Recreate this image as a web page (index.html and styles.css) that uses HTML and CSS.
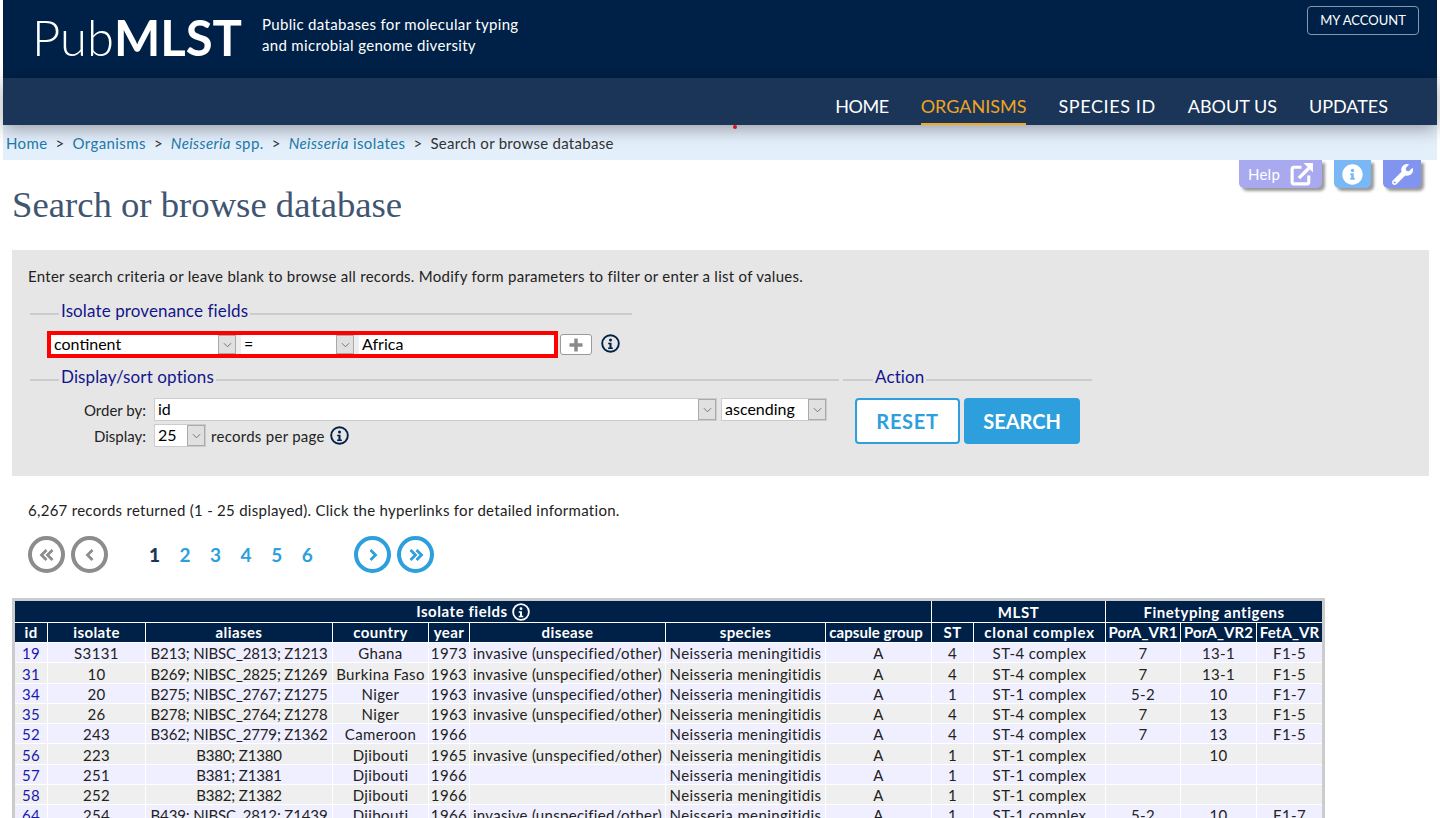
FILE: index.html
```html
<!DOCTYPE html>
<html lang="en">
<head>
<meta charset="utf-8">
<title>Search or browse database</title>
<link rel="stylesheet" href="styles.css">
</head>
<body>
<div class="page">
  <header class="masthead">
    <div class="logo"><span class="logo-light">Pub</span><b>MLST</b></div>
    <div class="tagline">Public databases for molecular typing<br>and microbial genome diversity</div>
    <a class="account">MY ACCOUNT</a>
  </header>
  <nav class="mainnav">
    <a class="nav-home">HOME</a><a class="active">ORGANISMS</a><a class="nav-id">SPECIES ID</a><a>ABOUT US</a><a>UPDATES</a>
    <span class="reddot"></span>
  </nav>
  <div class="crumbs"><a>Home</a><span class="sep">&gt;</span><a>Organisms</a><span class="sep">&gt;</span><a><i>Neisseria</i> spp.</a><span class="sep">&gt;</span><a><i>Neisseria</i> isolates</a><span class="sep">&gt;</span><span>Search or browse database</span></div>
  <main class="content">
    <div class="tools">
      <a class="tab tab-help">Help
        <svg class="ext" viewBox="0 0 24 24"><path d="M19 13v6.5a1.5 1.5 0 0 1-1.5 1.5h-13A1.5 1.5 0 0 1 3 19.500v-13A1.500 1.500 0 0 1 4.500 5H12" fill="none" stroke="currentColor" stroke-width="3"/><path d="M9.500 15.500 L19 6" fill="none" stroke="currentColor" stroke-width="3.200"/><path d="M14 1h9v9z" fill="currentColor"/></svg>
      </a>
      <a class="tab tab-info"><svg class="ic" viewBox="0 0 512 512"><path fill="currentColor" d="M256 8C119.043 8 8 119.083 8 256c0 136.997 111.043 248 248 248s248-111.003 248-248C504 119.083 392.957 8 256 8zm0 110c23.196 0 42 18.804 42 42s-18.804 42-42 42-42-18.804-42-42 18.804-42 42-42zm56 254c0 6.627-5.373 12-12 12h-88c-6.627 0-12-5.373-12-12v-24c0-6.627 5.373-12 12-12h12v-64h-12c-6.627 0-12-5.373-12-12v-24c0-6.627 5.373-12 12-12h64c6.627 0 12 5.373 12 12v100h12c6.627 0 12 5.373 12 12v24z"/></svg></a>
      <a class="tab tab-tool"><svg class="ic" viewBox="0 0 512 512"><path fill="currentColor" d="M507.73 109.1c-2.24-9.03-13.54-12.09-20.12-5.51l-74.36 74.36-67.88-11.31-11.31-67.88 74.36-74.36c6.62-6.62 3.43-17.9-5.66-20.16-47.38-11.74-99.55.91-136.58 37.93-39.64 39.64-50.55 97.1-34.05 147.2L18.74 402.76c-24.99 24.99-24.99 65.51 0 90.5 24.99 24.99 65.51 24.99 90.5 0l213.21-213.21c50.12 16.71 107.47 5.68 147.37-34.22 37.07-37.07 49.7-89.32 37.91-136.73zM64 472c-13.25 0-24-10.75-24-24 0-13.26 10.75-24 24-24s24 10.74 24 24c0 13.25-10.75 24-24 24z"/></svg></a>
    </div>
    <h1>Search or browse database</h1>
    <section class="panel">
      <p class="intro">Enter search criteria or leave blank to browse all records. Modify form parameters to filter or enter a list of values.</p>
      <div class="fs fs-prov">
        <div class="legend"><span>Isolate provenance fields</span></div>
        <div class="prov-row">
          <div class="redbox">
            <div class="select s-field"><span>continent</span><i class="arrow"><svg viewBox="0 0 10 6"><path d="M1 1l4 4 4-4" fill="none" stroke="#666" stroke-width="1"/></svg></i></div>
            <div class="select s-op"><span>=</span><i class="arrow"><svg viewBox="0 0 10 6"><path d="M1 1l4 4 4-4" fill="none" stroke="#666" stroke-width="1"/></svg></i></div>
            <div class="select s-val"><span>Africa</span></div>
          </div>
          <a class="plus"><svg viewBox="0 0 16 16"><path d="M8 1.500v13M1.500 8h13" stroke="#8a8a8a" stroke-width="3.500" fill="none"/></svg></a>
          <svg class="oinfo oinfo-a" viewBox="0 0 24 24"><circle cx="12" cy="12" r="10.500" fill="none" stroke="currentColor" stroke-width="2.400"/><circle cx="12" cy="7.500" r="1.900" fill="currentColor"/><path d="M9 11h4.300v6H15v2H9v-2h1.700v-4H9z" fill="currentColor"/></svg>
        </div>
      </div>
      <div class="fs-row">
        <div class="fs fs-display">
          <div class="legend"><span>Display/sort options</span></div>
          <div class="opt-row opt-first">
            <label>Order by:</label>
            <div class="select s-order"><span>id</span><i class="arrow"><svg viewBox="0 0 10 6"><path d="M1 1l4 4 4-4" fill="none" stroke="#666" stroke-width="1"/></svg></i></div>
            <div class="select s-dir"><span>ascending</span><i class="arrow"><svg viewBox="0 0 10 6"><path d="M1 1l4 4 4-4" fill="none" stroke="#666" stroke-width="1"/></svg></i></div>
          </div>
          <div class="opt-row">
            <label>Display:</label>
            <div class="select s-num"><span>25</span><i class="arrow"><svg viewBox="0 0 10 6"><path d="M1 1l4 4 4-4" fill="none" stroke="#666" stroke-width="1"/></svg></i></div>
            <span class="perpage">records per page</span>
            <svg class="oinfo" viewBox="0 0 24 24"><circle cx="12" cy="12" r="10.500" fill="none" stroke="currentColor" stroke-width="2.400"/><circle cx="12" cy="7.500" r="1.900" fill="currentColor"/><path d="M9 11h4.300v6H15v2H9v-2h1.700v-4H9z" fill="currentColor"/></svg>
          </div>
        </div>
        <div class="fs fs-action">
          <div class="legend legend-action"><span>Action</span></div>
          <div class="actions"><a class="btn btn-reset">RESET</a><a class="btn btn-search">SEARCH</a></div>
        </div>
      </div>
    </section>
    <p class="returned">6,267 records returned (1 - 25 displayed). Click the hyperlinks for detailed information.</p>
    <div class="pager">
      <a class="circ off"><svg viewBox="0 0 20 20"><path d="M9.500 5l-5 5 5 5M15.500 5l-5 5 5 5" fill="none" stroke="currentColor" stroke-width="2.800"/></svg></a>
      <a class="circ off"><svg viewBox="0 0 20 20"><path d="M12.500 5l-5 5 5 5" fill="none" stroke="currentColor" stroke-width="2.800"/></svg></a>
      <div class="nums"><b class="cur">1</b><a>2</a><a>3</a><a>4</a><a>5</a><a>6</a></div>
      <a class="circ"><svg viewBox="0 0 20 20"><path d="M7.500 5l5 5-5 5" fill="none" stroke="currentColor" stroke-width="2.800"/></svg></a>
      <a class="circ"><svg viewBox="0 0 20 20"><path d="M4.500 5l5 5-5 5M10.500 5l5 5-5 5" fill="none" stroke="currentColor" stroke-width="2.800"/></svg></a>
    </div>
    <div class="tablewrap">
    <table class="results">
      <colgroup><col class="c1"><col class="c2"><col class="c3"><col class="c4"><col class="c5"><col class="c6"><col class="c7"><col class="c8"><col class="c9"><col class="c10"><col class="c11"><col class="c12"><col class="c13"></colgroup>
      <thead>
        <tr class="h1row"><th colspan="8">Isolate fields <svg class="oinfo th-info" viewBox="0 0 24 24"><circle cx="12" cy="12" r="10.500" fill="none" stroke="currentColor" stroke-width="2.400"/><circle cx="12" cy="7.500" r="1.900" fill="currentColor"/><path d="M9 11h4.300v6H15v2H9v-2h1.700v-4H9z" fill="currentColor"/></svg></th><th colspan="2">MLST</th><th colspan="3">Finetyping antigens</th></tr>
        <tr class="h2row"><th>id</th><th>isolate</th><th>aliases</th><th>country</th><th>year</th><th>disease</th><th>species</th><th class="th-tight th-capsule">capsule group</th><th>ST</th><th class="th-wide">clonal complex</th><th class="th-tight">PorA_VR1</th><th class="th-tight">PorA_VR2</th><th class="th-tight">FetA_VR</th></tr>
      </thead>
      <tbody>
        <tr class="odd"><td><a>19</a></td><td>S3131</td><td class="alias">B213; NIBSC_2813; Z1213</td><td>Ghana</td><td>1973</td><td class="dis">invasive (unspecified/other)</td><td>Neisseria meningitidis</td><td>A</td><td>4</td><td>ST-4 complex</td><td>7</td><td>13-1</td><td>F1-5</td></tr>
        <tr class="even"><td><a>31</a></td><td>10</td><td class="alias">B269; NIBSC_2825; Z1269</td><td>Burkina Faso</td><td>1963</td><td class="dis">invasive (unspecified/other)</td><td>Neisseria meningitidis</td><td>A</td><td>4</td><td>ST-4 complex</td><td>7</td><td>13-1</td><td>F1-5</td></tr>
        <tr class="odd"><td><a>34</a></td><td>20</td><td class="alias">B275; NIBSC_2767; Z1275</td><td>Niger</td><td>1963</td><td class="dis">invasive (unspecified/other)</td><td>Neisseria meningitidis</td><td>A</td><td>1</td><td>ST-1 complex</td><td>5-2</td><td>10</td><td>F1-7</td></tr>
        <tr class="even"><td><a>35</a></td><td>26</td><td class="alias">B278; NIBSC_2764; Z1278</td><td>Niger</td><td>1963</td><td class="dis">invasive (unspecified/other)</td><td>Neisseria meningitidis</td><td>A</td><td>4</td><td>ST-4 complex</td><td>7</td><td>13</td><td>F1-5</td></tr>
        <tr class="odd"><td><a>52</a></td><td>243</td><td class="alias">B362; NIBSC_2779; Z1362</td><td>Cameroon</td><td>1966</td><td class="dis"></td><td>Neisseria meningitidis</td><td>A</td><td>4</td><td>ST-4 complex</td><td>7</td><td>13</td><td>F1-5</td></tr>
        <tr class="even"><td><a>56</a></td><td>223</td><td class="alias">B380; Z1380</td><td>Djibouti</td><td>1965</td><td class="dis">invasive (unspecified/other)</td><td>Neisseria meningitidis</td><td>A</td><td>1</td><td>ST-1 complex</td><td></td><td>10</td><td></td></tr>
        <tr class="odd"><td><a>57</a></td><td>251</td><td class="alias">B381; Z1381</td><td>Djibouti</td><td>1966</td><td class="dis"></td><td>Neisseria meningitidis</td><td>A</td><td>1</td><td>ST-1 complex</td><td></td><td></td><td></td></tr>
        <tr class="even"><td><a>58</a></td><td>252</td><td class="alias">B382; Z1382</td><td>Djibouti</td><td>1966</td><td class="dis"></td><td>Neisseria meningitidis</td><td>A</td><td>1</td><td>ST-1 complex</td><td></td><td></td><td></td></tr>
        <tr class="odd"><td><a>64</a></td><td>254</td><td class="alias">B439; NIBSC_2812; Z1439</td><td>Djibouti</td><td>1966</td><td class="dis">invasive (unspecified/other)</td><td>Neisseria meningitidis</td><td>A</td><td>1</td><td>ST-1 complex</td><td>5-2</td><td>10</td><td>F1-7</td></tr>
      </tbody>
    </table>
    </div>
  </main>
</div>
</body>
</html>
```
FILE: styles.css
```css
* { box-sizing: border-box; }
html, body { margin: 0; height: 818px; overflow: hidden; background: #fff; }
body { font-family: "Lato", "Noto Sans", sans-serif; font-size: 15px; letter-spacing: .28px; color: #222; }
a { text-decoration: none; }
.page { padding: 0 3px; height: 818px; overflow: hidden; }

.masthead { height: 78px; background: #002147; color: #fff; display: flex; align-items: flex-start; position: relative; letter-spacing: 0; }
.logo { font-size: 49px; line-height: 50px; margin: 12px 0 0 29px; width: 230px; white-space: nowrap; }
.logo-light { font-weight: 300; }
.logo b { font-weight: 700; }
.tagline { font-size: 15px; line-height: 21px; margin-top: 14px; letter-spacing: .32px; }
.account { margin: 6px 18px 0 auto; width: 112px; height: 29px; border: 1px solid #8a97a8; border-radius: 4px; font-size: 13px; line-height: 26px; text-align: center; color: #fff; }

.mainnav { height: 47px; background: #1a3558; display: flex; justify-content: flex-end; gap: 32px; padding-right: 49px; position: relative; box-shadow: 0 4px 18px rgba(0,0,0,.35); letter-spacing: 0; }
.mainnav a { color: #fff; font-size: 18px; line-height: 28px; height: 47px; padding-top: 14px; border-bottom: 2px solid transparent; }
.mainnav a.active { color: #f0a41f; border-bottom-color: #f5a81c; }
.mainnav a.nav-home { letter-spacing: -.5px; }
.mainnav a.nav-id { letter-spacing: .6px; }
.reddot { position: absolute; left: 730px; top: 47px; width: 4px; height: 4px; border-radius: 50%; background: #e01010; z-index: 2; }

.crumbs { height: 35px; background: #e4effc; padding: 9px 0 0 3px; font-size: 15px; line-height: 19px; color: #333; white-space: nowrap; }
.crumbs a { color: #217aa8; letter-spacing: .4px; }
.crumbs .sep { margin: 0 8px; color: #333; }

.content { padding: 0 8px 0 9px; }
.tools { height: 28px; display: flex; justify-content: flex-end; padding-right: 8px; }
.tab { height: 28px; color: #fff; border-radius: 0 0 5px 5px; box-shadow: 3px 3px 3px #999; display: flex; align-items: center; justify-content: center; font-size: 15px; }
.tab-help { width: 83px; background: #a9a9ef; margin-right: 12px; gap: 9px; padding-left: 1px; }
.tab-info { width: 37px; background: #7ab8f5; margin-right: 12px; }
.tab-tool { width: 38px; background: #8094f0; }
.ext { width: 25px; height: 25px; }
.ic { width: 21px; height: 21px; }

h1 { margin: -1px 0 0; font-family: "Liberation Serif", serif; font-weight: 400; font-size: 36.7px; line-height: 36px; letter-spacing: 0; color: #3f5572; }

.panel { margin-top: 27px; height: 226px; background: #e6e6e6; padding: 17px 0 0 18px; }
.intro { margin: 0 0 15px -2px; line-height: 18px; }
.fs-prov { width: 602px; }
.legend { display: flex; align-items: center; height: 20px; color: #14148c; font-size: 17px; gap: 2px; letter-spacing: .12px; }
.legend::before, .legend::after { content: ""; height: 2px; background: #ccc; margin-top: 8px; }
.legend::before { width: 29px; }
.legend::after { flex: 1; }
.legend-action::before { width: 30px; }
.prov-row { display: flex; align-items: center; margin: 11px 0 8px 17px; }
.redbox { display: flex; border: 4px solid #f00; height: 27px; width: 511px; gap: 5px; background: #eee; }
.select { display: flex; align-items: stretch; background: #fff; border: 1px solid #ccc; font-size: 16px; line-height: 20px; letter-spacing: 0; color: #000; padding-left: 3px; }
.select span { flex: 1; white-space: nowrap; }
.arrow { width: 18px; background: #e0e0e0; border: 1px solid #aaa; display: flex; align-items: center; justify-content: center; }
.arrow svg { width: 9px; height: 6px; }
.redbox .select { border: 0; line-height: 17px; }
.s-field { width: 185px; }
.s-op { width: 113px; }
.s-val { flex: 1; }
.plus { width: 32px; height: 21px; margin-left: 2px; background: #fff; border: 1px solid #999; border-radius: 3px; display: flex; align-items: center; justify-content: center; }
.plus svg { width: 16px; height: 16px; }
.oinfo { width: 19px; height: 19px; color: #002147; flex: none; }
.oinfo-a { margin: -2px 0 0 9px; }
.fs-row { display: flex; gap: 4px; }
.fs-display { width: 809px; }
.fs-action { width: 249px; }
.opt-row { display: flex; align-items: center; margin-top: 3px; height: 23px; }
.opt-first { margin-top: 12px; }
.opt-row label { width: 116px; text-align: right; margin-right: 8px; font-size: 15px; letter-spacing: 0; }
.s-order { width: 563px; margin-right: 4px; }
.s-dir { width: 106px; }
.s-num { width: 52px; margin-right: 5px; }
.opt-row .select { height: 23px; }
.perpage { margin-right: 5px; }
.actions { display: flex; gap: 4px; margin: 12px 0 0 12px; }
.btn { height: 46px; border-radius: 4px; font-weight: 700; font-size: 20px; line-height: 42px; text-align: center; border: 2px solid #2d9fdd; }
.btn-reset { width: 105px; background: #fff; color: #2d9fdd; letter-spacing: .7px; }
.btn-search { width: 116px; background: #2d9fdd; color: #fff; letter-spacing: 0; }

.returned { margin: 25px 0 0 16px; line-height: 19px; }
.pager { display: flex; align-items: center; margin: 16px 0 0 16px; height: 37px; }
.circ { width: 37px; height: 37px; border: 4px solid #2d9fdd; border-radius: 50%; color: #2d9fdd; display: flex; align-items: center; justify-content: center; margin-right: 6px; flex: none; }
.circ svg { width: 20px; height: 20px; }
.circ.off { border-color: #8c8c8c; color: #8c8c8c; }
.nums { display: flex; width: 240px; flex: none; padding-left: 35px; font-size: 19px; font-weight: 700; gap: 19.500px; letter-spacing: 0; margin-right: 0; }
.nums a { color: #2d9fdd; }
.nums .cur { color: #1a3558; }

.tablewrap { margin-top: 25px; width: 1313px; border: 3px solid #ccc; border-bottom: 0; }
.results { table-layout: fixed; width: 1307px; border-collapse: separate; border-spacing: 0; font-size: 15px; letter-spacing: .38px; }
.results th, .results td { padding: 0; text-align: center; white-space: nowrap; overflow: hidden; border-right: 1px solid #fff; border-bottom: 1px solid #fff; }
.results tr > :last-child { border-right: 0; }
.results th { background: #002147; color: #fff; font-weight: 700; letter-spacing: .4px; }
.results .th-tight { letter-spacing: .08px; }
.results .th-capsule { padding-right: 5px; }
.results .th-wide { letter-spacing: .8px; }
.h1row th { height: 22px; line-height: 16px; }
.results .h1row th { letter-spacing: .55px; }
.h2row th { height: 20px; line-height: 19px; }
.results td { height: 20.25px; line-height: 18px; padding-top: 1.250px; color: #222; }
.results td.alias { letter-spacing: -.15px; }
.results td.dis { letter-spacing: .3px; }
.odd td { background: #efefff; }
.even td { background: #efefef; }
.results td a { color: #1818b0; }
.th-info { width: 18px; height: 18px; color: #fff; vertical-align: -4px; }
.c1 { width: 33px; } .c2 { width: 98px; } .c3 { width: 187px; } .c4 { width: 96px; } .c5 { width: 41px; }
.c6 { width: 196px; } .c7 { width: 160px; } .c8 { width: 106px; } .c9 { width: 42px; } .c10 { width: 132px; }
.c11 { width: 75px; } .c12 { width: 76px; } .c13 { width: 65px; }
```
